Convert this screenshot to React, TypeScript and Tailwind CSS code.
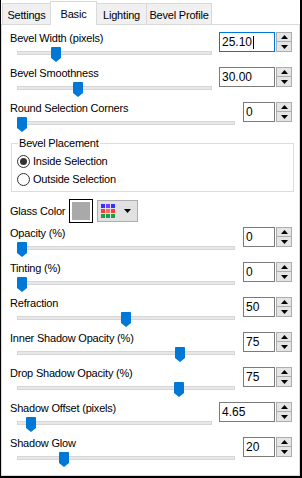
import React from 'react';

interface RowProps {
  label: string;
  value: string;
  thumb: number;
  wide?: boolean;
  focused?: boolean;
}

const Spinner = () => (
  <div className="ml-px flex h-[20px] w-[16px] flex-col">
    <div className="flex h-[10px] items-center justify-center border border-[#adadad] bg-[#e5e5e5]">
      <svg width="7" height="4" viewBox="0 0 7 4">
        <path d="M3.5 0L7 4H0Z" fill="#000" />
      </svg>
    </div>
    <div className="flex h-[10px] items-center justify-center border border-t-0 border-[#adadad] bg-[#e5e5e5]">
      <svg width="7" height="4" viewBox="0 0 7 4">
        <path d="M0 0H7L3.5 4Z" fill="#000" />
      </svg>
    </div>
  </div>
);

const NumBox = ({ value, wide, focused }: { value: string; wide?: boolean; focused?: boolean }) => (
  <div className="mr-[7px] flex">
    <div
      className={
        (wide ? 'w-[56px] ' : 'w-[32px] ') +
        (focused ? 'border-[#0078d7] ' : 'border-[#7a7a7a] ') +
        'flex h-[20px] items-center border bg-white pl-[2px] text-[12px] tracking-normal'
      }
    >
      {value}
      {focused && <span className="ml-px h-[13px] w-px bg-black" />}
    </div>
    <Spinner />
  </div>
);

const Thumb = () => (
  <svg width="10" height="15" viewBox="0 0 10 15">
    <path d="M1 0H9Q10 0 10 1V11L5 15L0 11V1Q0 0 1 0Z" fill="#0078d7" />
  </svg>
);

const SliderRow: React.FC<RowProps> = ({ label, value, thumb, wide, focused }) => (
  <div className="flex h-[35px] items-start">
    <div className="flex flex-1 flex-col">
      <div className="-mt-px h-[14px] pl-[8px] leading-[14px]">{label}</div>
      <div className={(wide ? 'mr-[7px] ' : 'mr-[8px] ') + 'relative ml-[15px] h-[16px]'}>
        <div className="mt-[6px] h-[4px] border border-[#d6d6d6] bg-[#e7e7e7]" />
        <div className="absolute top-[2px]" style={{ left: thumb }}>
          <Thumb />
        </div>
      </div>
    </div>
    <NumBox value={value} wide={wide} focused={focused} />
  </div>
);

const Radio = ({ label, checked }: { label: string; checked?: boolean }) => (
  <div className="flex h-[18px] items-center pl-[5px]">
    <div className="flex h-[13px] w-[13px] items-center justify-center rounded-full border border-[#333] bg-white">
      {checked && <div className="h-[7px] w-[7px] rounded-full bg-[#333]" />}
    </div>
    <span className="ml-[3px]">{label}</span>
  </div>
);

const ColorGrid = () => {
  const cells = ['#3333ff', '#7a3cff', '#3333ff', '#ff3b3b', '#ff6a5a', '#ff3b3b', '#1fa046', '#1fa046', '#1fa046'];
  return (
    <div className="grid grid-cols-3 gap-px">
      {cells.map((c, i) => (
        <div key={i} className="h-[4px] w-[4px]" style={{ background: c }} />
      ))}
    </div>
  );
};

const tabBase = 'h-[21px] border border-b-0 border-[#d9d9d9] bg-[#f0f0f0] pt-[4px] text-center leading-[14px]';

export default function App() {
  return (
    <div className="h-[478px] w-[302px] border-b-2 border-l border-r-2 border-black bg-white font-['Liberation_Sans',Arial,sans-serif] text-[11px] tracking-[-0.2px] text-black">
      <div className="flex h-[24px] items-end">
        <div className={tabBase + ' ml-px w-[49px]'}>Settings</div>
        <div className="relative top-px z-10 -ml-px h-[24px] w-[47px] border border-b-0 border-[#d9d9d9] bg-white pt-[5px] text-center leading-[14px]">
          Basic
        </div>
        <div className={tabBase + ' -ml-px w-[51px]'}>Lighting</div>
        <div className={tabBase + ' -ml-px w-[66px]'}>Bevel Profile</div>
      </div>

      <div className="h-[452px] border border-[#d9d9d9] pt-[7px]">
        <SliderRow label="Bevel Width (pixels)" value="25.10" thumb={34} wide focused />
        <SliderRow label="Bevel Smoothness" value="30.00" thumb={56} wide />
        <SliderRow label="Round Selection Corners" value="0" thumb={0} />

        <fieldset className="ml-[9px] mr-[5px] border border-[#dcdcdc] pb-[3px] pt-[3px]">
          <legend className="ml-[6px] px-px leading-[12px]">Bevel Placement</legend>
          <Radio label="Inside Selection" checked />
          <Radio label="Outside Selection" />
        </fieldset>

        <div className="mb-[4px] mt-[7px] flex h-[24px] items-center pl-[8px]">
          <span className="w-[59px]">Glass Color</span>
          <div className="h-[24px] w-[24px] border border-black bg-white p-[2px]">
            <div className="h-full w-full bg-[#a9a9a9]" />
          </div>
          <div className="ml-[4px] flex h-[22px] w-[41px] items-center border border-[#adadad] bg-[#e1e1e1] pl-[3px]">
            <ColorGrid />
            <svg className="ml-[9px]" width="7" height="4" viewBox="0 0 7 4">
              <path d="M0 0H7L3.5 4Z" fill="#000" />
            </svg>
          </div>
        </div>

        <SliderRow label="Opacity (%)" value="0" thumb={0} />
        <SliderRow label="Tinting (%)" value="0" thumb={0} />
        <SliderRow label="Refraction" value="50" thumb={104} />
        <SliderRow label="Inner Shadow Opacity (%)" value="75" thumb={158} />
        <SliderRow label="Drop Shadow Opacity (%)" value="75" thumb={157} />
        <SliderRow label="Shadow Offset (pixels)" value="4.65" thumb={9} wide />
        <SliderRow label="Shadow Glow" value="20" thumb={42} />
      </div>
    </div>
  );
}
